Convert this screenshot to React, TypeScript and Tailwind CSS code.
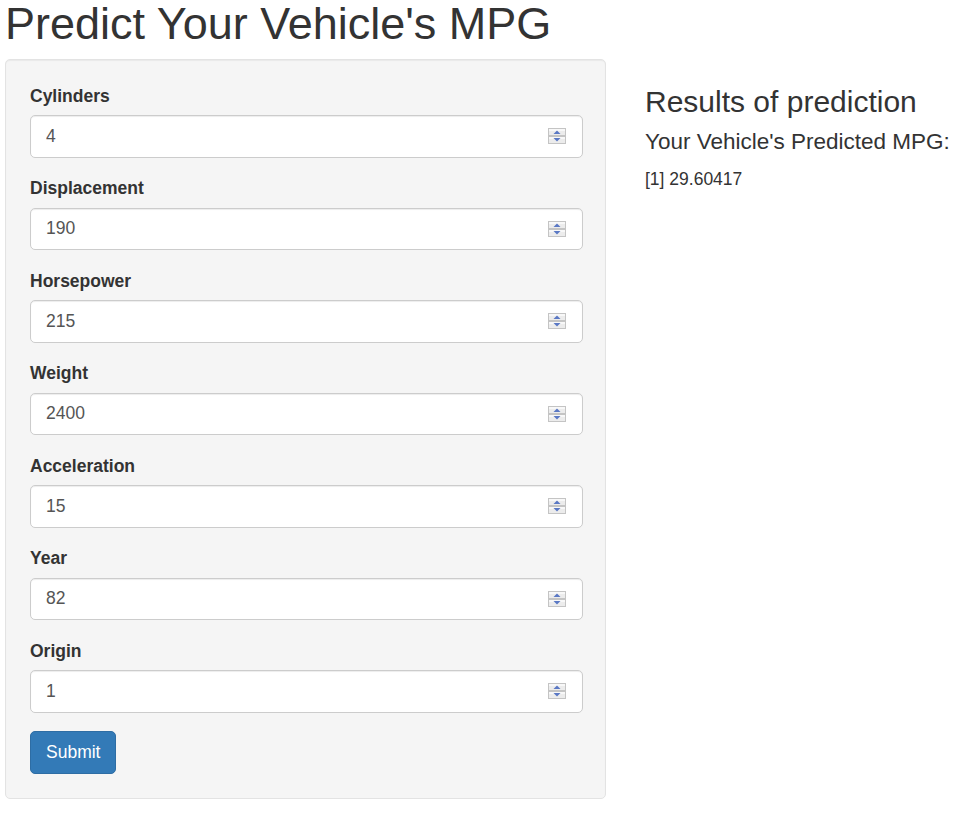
import React from "react";

const fields: { label: string; value: string }[] = [
  { label: "Cylinders", value: "4" },
  { label: "Displacement", value: "190" },
  { label: "Horsepower", value: "215" },
  { label: "Weight", value: "2400" },
  { label: "Acceleration", value: "15" },
  { label: "Year", value: "82" },
  { label: "Origin", value: "1" },
];

function Spinner() {
  return (
    <svg width="18" height="16" viewBox="0 0 18 16" className="block">
      <rect x="0.5" y="0.5" width="17" height="7" fill="#ececec" stroke="#c4c4c4" />
      <rect x="0.5" y="8.5" width="17" height="7" fill="#ececec" stroke="#c4c4c4" />
      <rect x="1" y="1" width="16" height="2" fill="#f8f8f8" />
      <rect x="1" y="9" width="16" height="2" fill="#f8f8f8" />
      <polygon points="5.5,6 12.5,6 9,2.5" fill="#5a78c4" />
      <polygon points="5.5,10 12.5,10 9,13.5" fill="#5a78c4" />
    </svg>
  );
}

function NumberField({ label, value }: { label: string; value: string }) {
  return (
    <div className="mb-[18.75px]">
      <label className="block font-bold text-[17.5px] leading-[25px] mb-[6.25px] text-[#333]">
        {label}
      </label>
      <div className="relative">
        <input
          type="text"
          defaultValue={value}
          className="block w-full h-[42.5px] px-[15px] text-[17.5px] text-[#555] bg-white border border-[#ccc] rounded-[5px] shadow-[inset_0_1px_1px_rgba(0,0,0,0.075)] outline-none"
          style={{ fontFamily: '"Liberation Sans", Arial, sans-serif' }}
        />
        <div className="absolute right-[17px] top-1/2 -translate-y-1/2">
          <Spinner />
        </div>
      </div>
    </div>
  );
}

export default function App() {
  return (
    <div
      className="w-[959px] h-[816px] bg-white text-[#333] pt-px"
      style={{ fontFamily: '"Liberation Sans", Arial, sans-serif' }}
    >
      <h1 className="text-[45px] leading-[45px] font-normal m-0 pl-[5px] text-[#333]">
        Predict Your Vehicle's MPG
      </h1>
      <div className="flex mt-[13px] pl-[5px]">
        <div className="w-[601px] shrink-0 bg-[#f5f5f5] border border-[#e3e3e3] rounded-[5px] shadow-[inset_0_1px_1px_rgba(0,0,0,0.05)] pl-[24px] pr-[22px] py-[23.75px]">
          {fields.map((f) => (
            <NumberField key={f.label} label={f.label} value={f.value} />
          ))}
          <button className="h-[42.5px] px-[15px] text-[17.5px] leading-[25px] text-white bg-[#337ab7] border border-[#2e6da4] rounded-[5px]">
            Submit
          </button>
        </div>
        <div className="ml-[39px] flex flex-col">
          <h3 className="mt-[26px] text-[30px] leading-[33px] font-normal whitespace-nowrap">
            Results of prediction
          </h3>
          <h4 className="mt-[12px] text-[22.5px] leading-[24.75px] font-normal whitespace-nowrap">
            Your Vehicle's Predicted MPG:
          </h4>
          <div className="mt-[12.5px] text-[17.5px] leading-[25px] whitespace-nowrap">
            [1] 29.60417
          </div>
        </div>
      </div>
    </div>
  );
}
